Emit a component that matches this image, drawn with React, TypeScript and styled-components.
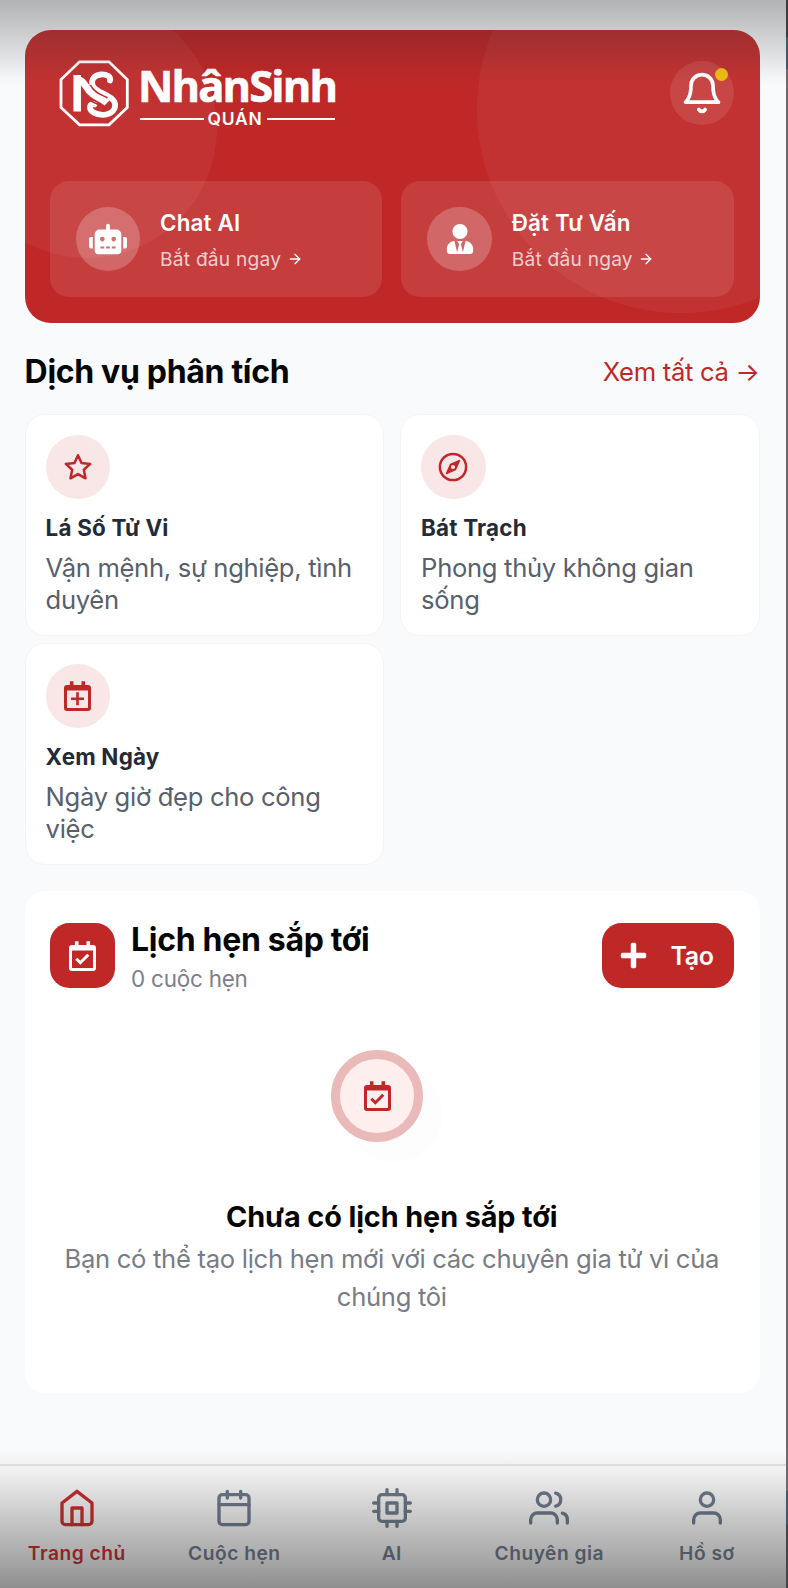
import React from "react";
import styled, { createGlobalStyle } from "styled-components";
import { FaPlus, FaRobot, FaUserTie } from "react-icons/fa";
import { FiArrowRight, FiBell, FiCalendar, FiCpu, FiHome, FiUser, FiUsers } from "react-icons/fi";

const RED = "#c02828";

const GlobalStyle = createGlobalStyle`
  * { box-sizing: border-box; }
  body { margin: 0; background: #f9fafc; font-family: Inter, "Liberation Sans", sans-serif; }
  h2, h3, p { margin: 0; }
  button { font: inherit; border: 0; cursor: pointer; }
  svg { display: block; flex-shrink: 0; }
`;

const Screen = styled.div`
  position: relative;
  display: flex;
  width: 788px;
  height: 1588px;
  overflow: hidden;
  background: #f9fafc;
`;

const Phone = styled.div`
  display: flex;
  flex-direction: column;
  flex: 1;
  min-width: 0;
`;

const DeviceEdge = styled.div`
  width: 2.4px;
  background: linear-gradient(
    #3c3c3e 0 37px, #43576b 37px 69px, #6b696b 69px 1491px,
    #43576b 1491px 1525px, #444446 1525px
  );
`;

const Content = styled.main`
  flex: 1;
  padding: 30px 26px 0 24.6px;
`;

const Hero = styled.section`
  position: relative;
  height: 293px;
  padding: 30px 25.6px 26px 25px;
  border-radius: 26px;
  background: ${RED};
  overflow: hidden;
  display: flex;
  flex-direction: column;
  justify-content: space-between;
`;

const Bubble = styled.span<{ $x: number; $y: number; $r: number }>`
  position: absolute;
  left: ${(p) => p.$x - p.$r}px;
  top: ${(p) => p.$y - p.$r}px;
  width: ${(p) => p.$r * 2}px;
  height: ${(p) => p.$r * 2}px;
  border-radius: 50%;
  background: rgba(255, 255, 255, 0.05);
`;

const HeroTop = styled.div`
  position: relative;
  display: flex;
  justify-content: space-between;
  align-items: flex-start;
  padding-left: 9px;
`;

const BellButton = styled.button`
  position: relative;
  display: grid;
  place-items: center;
  width: 64px;
  height: 64px;
  margin-top: 1px;
  padding: 0;
  border-radius: 50%;
  color: #fff;
  background: rgba(255, 255, 255, 0.1);
`;

const Dot = styled.span`
  position: absolute;
  right: 6px;
  top: 6.5px;
  width: 13px;
  height: 13px;
  border-radius: 50%;
  background: #f0be13;
`;

const Actions = styled.div`
  position: relative;
  display: grid;
  grid-template-columns: 1fr 1fr;
  gap: 19px;
`;

const ActionCard = styled.div`
  display: flex;
  align-items: center;
  gap: 20px;
  height: 116px;
  padding: 0 26px;
  border-radius: 19px;
  background: rgba(255, 255, 255, 0.1);
  color: #fff;
`;

const ActionIcon = styled.span`
  display: grid;
  place-items: center;
  width: 64.5px;
  height: 64.5px;
  border-radius: 50%;
  background: rgba(255, 255, 255, 0.22);
`;

const ActionTitle = styled.h3`
  margin-top: 3px;
  font-size: 22.4px;
  line-height: 32px;
  font-weight: 600;
  letter-spacing: 0.15px;
`;

const ActionHint = styled.p`
  display: flex;
  align-items: center;
  gap: 5.5px;
  margin-top: 5px;
  font-size: 19.2px;
  line-height: 30px;
  letter-spacing: 0.2px;
  color: rgba(255, 255, 255, 0.75);
  svg { color: #fff; }
`;

const SectionHead = styled.div`
  display: flex;
  justify-content: space-between;
  align-items: center;
  height: 91px;
  padding-top: 6.5px;
`;

const Heading = styled.h2`
  font-size: 32px;
  line-height: 40px;
  font-weight: 700;
  letter-spacing: -0.32px;
  color: #050506;
  white-space: nowrap;
`;

const SeeAll = styled.a`
  font-size: 25.6px;
  line-height: 38px;
  letter-spacing: -0.3px;
  color: ${RED};
  white-space: nowrap;
`;

const Services = styled.div`
  display: grid;
  grid-template-columns: 1fr 1fr;
  gap: 7px 16px;
`;

const ServiceCard = styled.article`
  height: 222px;
  padding: 19.5px 19.5px 0 20px;
  border: 1.6px solid #f3f4f6;
  border-radius: 20px;
  background: #fff;
`;

const ServiceIcon = styled.span`
  display: grid;
  place-items: center;
  width: 64.5px;
  height: 64.5px;
  border-radius: 50%;
  color: ${RED};
  background: #f9e6e7;
`;

const ServiceTitle = styled.h3`
  margin-top: 13px;
  font-size: 22.4px;
  line-height: 32px;
  font-weight: 700;
  letter-spacing: 0.2px;
  color: #252b36;
`;

const ServiceText = styled.p`
  margin-top: 8px;
  font-size: 25.6px;
  line-height: 32px;
  letter-spacing: -0.31px;
  color: #57606d;
`;

const Upcoming = styled.section`
  height: 502px;
  margin-top: 26px;
  padding: 32px 25.6px 0 25px;
  border-radius: 20px;
  background: #fff;
`;

const UpcomingHead = styled.div`
  display: flex;
  align-items: center;
  height: 65px;
`;

const CalendarTile = styled.span`
  display: grid;
  place-items: center;
  width: 65px;
  height: 65px;
  border-radius: 19.5px;
  color: #fff;
  background: ${RED};
`;

const HeadText = styled.div`
  flex: 1;
  margin: 3px 0 0 16.5px;
`;

const Count = styled.p`
  font-size: 22.4px;
  line-height: 32px;
  letter-spacing: -0.2px;
  color: #7b808a;
  margin-top: 3px;
`;

const CreateButton = styled.button`
  display: flex;
  align-items: center;
  justify-content: space-between;
  width: 132.5px;
  height: 65px;
  padding: 0 20.5px 0 17.5px;
  border-radius: 19.5px;
  color: #fff;
  background: ${RED};
  font-size: 25px;
  font-weight: 600;
  letter-spacing: -0.4px;
`;

const Empty = styled.div`
  display: flex;
  flex-direction: column;
  align-items: center;
  padding-top: 61.5px;
  text-align: center;
`;

const Badge = styled.div`
  position: relative;
  width: 92px;
  height: 92px;
  margin: 0 29.5px 55.5px 0;
  &::before {
    content: "";
    position: absolute;
    left: 15px;
    top: 16px;
    width: 96px;
    height: 96px;
    border-radius: 50%;
    background: #fefdfd;
  }
`;

const BadgeDisc = styled.span`
  position: relative;
  display: grid;
  place-items: center;
  width: 92px;
  height: 92px;
  border: 9.5px solid #eababa;
  border-radius: 50%;
  color: ${RED};
  background: #feefee;
`;

const EmptyTitle = styled(Heading)`
  font-size: 28.8px;
  letter-spacing: -0.1px;
`;

const EmptyText = styled.p`
  margin-top: 3px;
  width: 680px;
  font-size: 25.6px;
  line-height: 38.4px;
  letter-spacing: -0.29px;
  color: #777c86;
`;

const Nav = styled.nav`
  display: grid;
  grid-template-columns: repeat(5, 1fr);
  height: 124.5px;
  margin-left: -2px;
  border-top: 2px solid #e5e6e8;
  background: #fff;
`;

const NavItem = styled.a<{ $active?: boolean }>`
  display: flex;
  flex-direction: column;
  align-items: center;
  gap: 11px;
  padding: 22px 0 0;
  font-size: 19.2px;
  line-height: 28px;
  font-weight: 600;
  letter-spacing: 0.5px;
  color: ${(p) => (p.$active ? "#cf2c2c" : "#707c8d")};
  white-space: nowrap;
`;

const Shade = styled.div<{ $edge: "top" | "bottom" }>`
  position: absolute;
  left: 0;
  width: 785.6px;
  pointer-events: none;
  ${(p) =>
    p.$edge === "top"
      ? `top: 0; height: 86px;
         background: linear-gradient(rgba(35,35,38,.32), rgba(35,35,38,.31) 6px, rgba(35,35,38,.21) 32px, rgba(35,35,38,.12) 55px, rgba(35,35,38,.03) 75px, rgba(35,35,38,0));`
      : `bottom: 0; height: 138px;
         background: linear-gradient(rgba(25,25,28,0), rgba(25,25,28,.06) 20px, rgba(25,25,28,.18) 52px, rgba(25,25,28,.29) 82px, rgba(25,25,28,.39) 112px, rgba(25,25,28,.49));`}
`;

const LogoRow = styled.div`
  display: flex;
  gap: 9.5px;
  color: #fff;
`;

const Wordmark = styled.div`
  display: flex;
  flex-direction: column;
  width: 198px;
  padding-top: 1.5px;
`;

const BrandName = styled.span`
  font-family: "Open Sans", "Noto Sans", sans-serif;
  font-size: 43.5px;
  line-height: 48px;
  font-weight: 700;
  letter-spacing: -1.9px;
  -webkit-text-stroke: 0.6px #fff;
  white-space: nowrap;
`;

const BrandSub = styled.span`
  display: flex;
  align-items: center;
  gap: 4px;
  width: 195px;
  margin: -1px 0 0 2px;
  font-family: Inter, sans-serif;
  font-size: 17.4px;
  line-height: 20px;
  font-weight: 600;
  letter-spacing: 0.8px;
  &::before, &::after {
    content: "";
    flex: 1;
    height: 2px;
    background: #fff;
  }
  &::after { flex-grow: 1.08; }
`;

const Logo = () => (
  <LogoRow>
    <svg width="70" height="70" viewBox="0 0 70 70" fill="none">
      <path d="M20.500 1.800h29.500L68.300 19.500v28L50 64.800H20.500L2 47.500v-28Z" stroke="#fff" strokeWidth="2.800" />
      <path d="M18.200 51.500V15" stroke="#fff" strokeWidth="7.500" />
      <path d="M16 18.500c7 .5 9.500 6 13.500 11.500 5 6.500 14 8.500 18.500 13" stroke="#fff" strokeWidth="7" />
      <path
        d="M51 20.500c1-4-3.500-6.500-9-6-7 .5-10 5.500-8.500 10.500 2.500 8 18.500 9 22 17 2.500 7-3 12.500-11 12.800-8 .2-14-3.300-13.500-8.300.2-2 2.500-3 4.500-2"
        stroke="#fff" strokeWidth="5.800" strokeLinecap="round"
      />
      <path d="M22.500 31c5 9 12.500 11.500 19 14.500 3 1.300 5 3 5.500 5M31.500 25c3 7.500 11 9.500 17 13" stroke="#bd3031" strokeWidth="1.500" />
    </svg>
    <Wordmark>
      <BrandName>NhânSinh</BrandName>
      <BrandSub>QUÁN</BrandSub>
    </Wordmark>
  </LogoRow>
);

const StarIcon = () => (
  <svg width="30" height="30" viewBox="0 0 30 30" fill="none" stroke="currentColor" strokeWidth="2.500" strokeLinejoin="round">
    <path d="m15 3.200 3.500 7.700 8.700 1-6.400 5.800 1.700 8.600L15 22.100l-7.500 4.200 1.700-8.600-6.400-5.800 8.700-1Z" />
  </svg>
);

const CompassIcon = () => (
  <svg width="30" height="30" viewBox="0 0 30 30" fill="none">
    <circle cx="15" cy="15" r="13.100" stroke="currentColor" strokeWidth="2.500" />
    <path
      d="M21.600 8.400 17.600 17.600 8.400 21.600 12.400 12.400ZM15 12.900a2.100 2.100 0 1 0 0 4.200 2.100 2.100 0 0 0 0-4.200Z"
      fill="currentColor" fillRule="evenodd"
    />
    <path d="M21.600 8.400 17.600 17.600 8.400 21.600 12.400 12.400Z" stroke="currentColor" strokeWidth="1.300" strokeLinejoin="round" />
  </svg>
);

const CalendarIcon = ({ mark }: { mark: "plus" | "check" }) => (
  <svg width="27" height="30" viewBox="0 0 27 30" fill="none">
    <path
      d="M3 4h2.900V.300h3.600V4h8V.300h3.600V4H24a3 3 0 0 1 3 3v20a3 3 0 0 1-3 3H3a3 3 0 0 1-3-3V7a3 3 0 0 1 3-3ZM3 9.500V27h21V9.500Z"
      fill="currentColor" fillRule="evenodd"
    />
    <path
      d={mark === "plus" ? "M13.500 11.300v13M7 17.800h13" : "m7.300 17.700 4 4 8-8"}
      stroke="currentColor" strokeWidth={mark === "plus" ? 2.6 : 3}
    />
  </svg>
);

const services = [
  { icon: <StarIcon />, title: "Lá Số Tử Vi", text: "Vận mệnh, sự nghiệp, tình duyên" },
  { icon: <CompassIcon />, title: "Bát Trạch", text: "Phong thủy không gian sống" },
  { icon: <CalendarIcon mark="plus" />, title: "Xem Ngày", text: "Ngày giờ đẹp cho công việc" },
];

const tabs = [
  { icon: FiHome, label: "Trang chủ" },
  { icon: FiCalendar, label: "Cuộc hẹn" },
  { icon: FiCpu, label: "AI" },
  { icon: FiUsers, label: "Chuyên gia" },
  { icon: FiUser, label: "Hồ sơ" },
];

export default function App() {
  return (
    <Screen>
      <GlobalStyle />
      <Phone>
        <Content>
          <Hero>
            <Bubble $x={62.5} $y={98} $r={130} />
            <Bubble $x={656} $y={79} $r={204} />
            <HeroTop>
              <Logo />
              <BellButton aria-label="Thông báo">
                <FiBell size={44} />
                <Dot />
              </BellButton>
            </HeroTop>
            <Actions>
              <ActionCard>
                <ActionIcon><FaRobot size={38} /></ActionIcon>
                <div>
                  <ActionTitle>Chat AI</ActionTitle>
                  <ActionHint>Bắt đầu ngay <FiArrowRight size={16} /></ActionHint>
                </div>
              </ActionCard>
              <ActionCard>
                <ActionIcon><FaUserTie size={30} /></ActionIcon>
                <div>
                  <ActionTitle>Đặt Tư Vấn</ActionTitle>
                  <ActionHint>Bắt đầu ngay <FiArrowRight size={16} /></ActionHint>
                </div>
              </ActionCard>
            </Actions>
          </Hero>

          <SectionHead>
            <Heading>Dịch vụ phân tích</Heading>
            <SeeAll>Xem tất cả →</SeeAll>
          </SectionHead>

          <Services>
            {services.map(({ icon, title, text }) => (
              <ServiceCard key={title}>
                <ServiceIcon>{icon}</ServiceIcon>
                <ServiceTitle>{title}</ServiceTitle>
                <ServiceText>{text}</ServiceText>
              </ServiceCard>
            ))}
          </Services>

          <Upcoming>
            <UpcomingHead>
              <CalendarTile><CalendarIcon mark="check" /></CalendarTile>
              <HeadText>
                <Heading>Lịch hẹn sắp tới</Heading>
                <Count>0 cuộc hẹn</Count>
              </HeadText>
              <CreateButton><FaPlus size={29} />Tạo</CreateButton>
            </UpcomingHead>
            <Empty>
              <Badge><BadgeDisc><CalendarIcon mark="check" /></BadgeDisc></Badge>
              <EmptyTitle as="h3">Chưa có lịch hẹn sắp tới</EmptyTitle>
              <EmptyText>Bạn có thể tạo lịch hẹn mới với các chuyên gia tử vi của chúng tôi</EmptyText>
            </Empty>
          </Upcoming>
        </Content>

        <Nav>
          {tabs.map(({ icon: Icon, label }, i) => (
            <NavItem key={label} $active={i === 0}>
              <Icon size={40} />
              {label}
            </NavItem>
          ))}
        </Nav>
      </Phone>
      <DeviceEdge />
      <Shade $edge="top" />
      <Shade $edge="bottom" />
    </Screen>
  );
}
